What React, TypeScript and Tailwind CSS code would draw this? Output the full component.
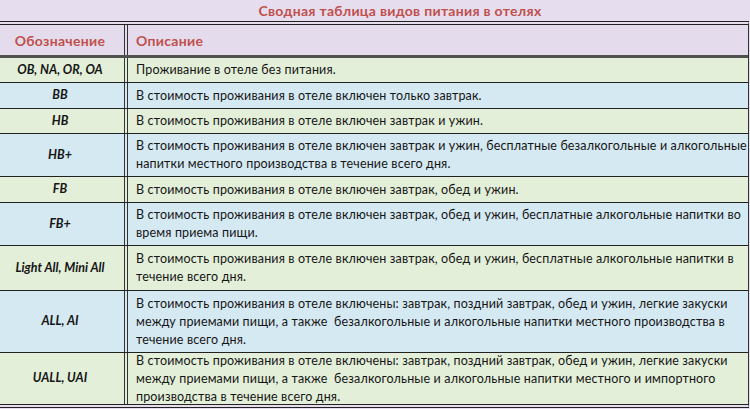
const rows: { code: string; lines: string[]; bg: string; h: string }[] = [
  { code: "OB, NA, OR, OA", lines: ["Проживание в отеле без питания."], bg: "bg-[#e3efd9]", h: "h-[25px]" },
  { code: "BB", lines: ["В стоимость проживания в отеле включен только завтрак."], bg: "bg-[#d5e9f3]", h: "h-[26px]" },
  { code: "HB", lines: ["В стоимость проживания в отеле включен завтрак и ужин."], bg: "bg-[#e3efd9]", h: "h-[25px]" },
  {
    code: "HB+",
    lines: [
      "В стоимость проживания в отеле включен завтрак и ужин, бесплатные безалкогольные и алкогольные",
      "напитки местного производства в течение всего дня.",
    ],
    bg: "bg-[#d5e9f3]",
    h: "h-[43px]",
  },
  { code: "FB", lines: ["В стоимость проживания в отеле включен завтрак, обед и ужин."], bg: "bg-[#e3efd9]", h: "h-[26px]" },
  {
    code: "FB+",
    lines: [
      "В стоимость проживания в отеле включен завтрак, обед и ужин, бесплатные алкогольные напитки во",
      "время приема пищи.",
    ],
    bg: "bg-[#d5e9f3]",
    h: "h-[43px]",
  },
  {
    code: "Light All, Mini All",
    lines: [
      "В стоимость проживания в отеле включен завтрак, обед и ужин, бесплатные алкогольные напитки в",
      "течение всего дня.",
    ],
    bg: "bg-[#e3efd9]",
    h: "h-[45px]",
  },
  {
    code: "ALL, AI",
    lines: [
      "В стоимость проживания в отеле включены: завтрак, поздний завтрак, обед и ужин, легкие закуски",
      "между приемами пищи, а также  безалкогольные и алкогольные напитки местного производства в",
      "течение всего дня.",
    ],
    bg: "bg-[#d5e9f3]",
    h: "h-[62px]",
  },
  {
    code: "UALL, UAI",
    lines: [
      "В стоимость проживания в отеле включены: завтрак, поздний завтрак, обед и ужин, легкие закуски",
      "между приемами пищи, а также  безалкогольные и алкогольные напитки местного и импортного",
      "производства в течение всего дня.",
    ],
    bg: "bg-[#e3efd9]",
    h: "h-[51px]",
  },
];

export default function App() {
  return (
    <div
      className="w-[750px] h-[409px] overflow-hidden bg-[#e6deee] text-[#151515]"
      style={{ fontFamily: "Lato, 'Open Sans', sans-serif" }}
    >
      <div className="h-[21px] flex items-center justify-center pl-[50px] text-[14px] tracking-[0.3px] font-bold text-[#c0504d]">
        Сводная таблица видов питания в отелях
      </div>

      <div className="mr-[1px] border-t-4 border-b-4 border-double border-[#222] border-r border-r-[#333]">
        {/* header */}
        <div className="flex h-[33px] border-b-[3px] border-[#4f524c] bg-[#e4dcec]">
          <div className="w-[128px] shrink-0 flex items-center justify-center pr-[4px] border-r-4 border-double border-[#333] text-[14px] tracking-[0.3px] font-bold text-[#c0504d]">
            Обозначение
          </div>
          <div className="flex-1 flex items-center pl-[8px] text-[14px] tracking-[0.3px] font-bold text-[#c0504d]">
            Описание
          </div>
        </div>

        {rows.map((r, i) => (
          <div
            key={r.code}
            className={`flex ${r.h} ${r.bg} ${i < rows.length - 1 ? "border-b border-[#222]" : ""}`}
          >
            <div className="w-[128px] shrink-0 flex items-center justify-center pr-[4px] border-r-4 border-double border-[#333] text-[12.5px] font-bold italic whitespace-nowrap">
              {r.code}
            </div>
            <div className="flex-1 flex flex-col justify-center pl-[8px] text-[12.5px] tracking-[0.15px] leading-[18px]">
              {r.lines.map((l, j) => (
                <span key={j} className="whitespace-pre">
                  {l}
                </span>
              ))}
            </div>
          </div>
        ))}
      </div>
    </div>
  );
}
